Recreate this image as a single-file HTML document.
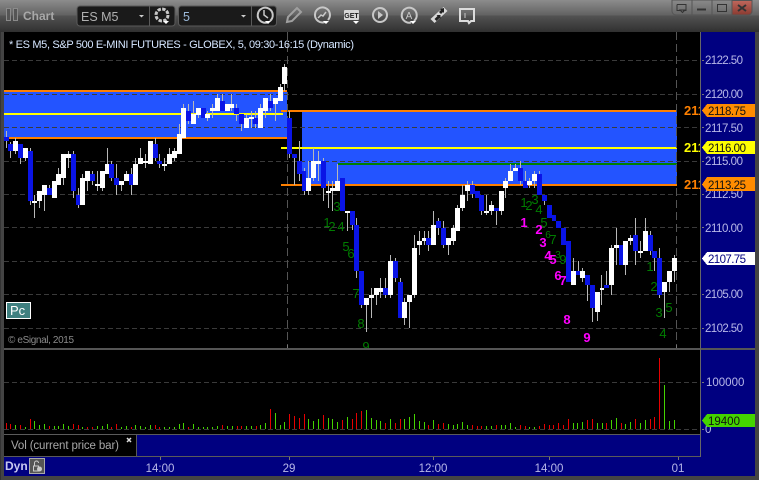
<!DOCTYPE html>
<html><head><meta charset="utf-8"><style>
html,body{margin:0;padding:0;background:#000;width:759px;height:480px;overflow:hidden}
svg{display:block}
text{font-family:"Liberation Sans",sans-serif}
</style></head><body>
<svg width="759" height="480" viewBox="0 0 759 480" xmlns="http://www.w3.org/2000/svg">
<defs>
<linearGradient id="tb" x1="0" y1="0" x2="0" y2="1"><stop offset="0" stop-color="#8c8c8c"/><stop offset=".47" stop-color="#626262"/><stop offset=".5" stop-color="#525252"/><stop offset="1" stop-color="#303030"/></linearGradient>
<linearGradient id="wb" x1="0" y1="0" x2="0" y2="1"><stop offset="0" stop-color="#8a8a8a"/><stop offset="1" stop-color="#666"/></linearGradient>
<linearGradient id="wr" x1="0" y1="0" x2="0" y2="1"><stop offset="0" stop-color="#c0675c"/><stop offset="1" stop-color="#8a3a30"/></linearGradient>
</defs>
<rect width="759" height="480" fill="#444"/>
<rect width="759" height="32" fill="url(#tb)"/>
<rect x="0" y="32" width="1" height="448" fill="#333"/>
<rect x="4" y="32" width="697" height="316" fill="#000"/>

<!-- zones -->
<g shape-rendering="crispEdges">
<rect x="4" y="91" width="283" height="47" fill="#2354ff"/>
<rect x="302" y="111" width="375" height="74" fill="#2354ff"/>
<rect x="4" y="90" width="283" height="2" fill="#ff8000"/>
<rect x="4" y="137" width="283" height="2" fill="#ff8000"/>
<rect x="4" y="113" width="279" height="2" fill="#ffff00"/>
<rect x="281" y="110" width="396" height="2" fill="#ff8000"/>
<rect x="281" y="147" width="396" height="2" fill="#ffff00"/>
<rect x="338" y="163" width="339" height="2" fill="#008000"/>
<rect x="281" y="184" width="396" height="2" fill="#ff8000"/>
</g>
<!-- grid -->
<g stroke="#3a3a3a" stroke-dasharray="5 3" shape-rendering="crispEdges" fill="none">
<path d="M4 60.500H700M4 94.500H700M4 127.500H700M4 161.500H700M4 194.500H700M4 227.500H700M4 261.500H700M4 294.500H700M4 328.500H700"/>
</g>
<path d="M287.500 32V348M676.500 32V348" stroke="#555" stroke-dasharray="8 4" shape-rendering="crispEdges" fill="none"/>

<!-- wicks -->
<path shape-rendering="crispEdges" fill="none" stroke="#b8b8b8" d="M6.500 131V148M10.500 142V158M15.500 138V154M20.500 144V164M25.500 148V161M30.500 148V205M34.500 195V218M39.500 191V208M44.500 185V211M49.500 185V195M54.500 181V198M58.500 168V185M63.500 154V185M68.500 151V168M73.500 151V198M78.500 188V208M82.500 174V205M87.500 171V191M92.500 171V185M97.500 171V191M102.500 171V191M107.500 148V174M111.500 161V181M116.500 164V195M121.500 181V191M126.500 171V181M131.500 168V195M135.500 158V185M140.500 148V164M145.500 154V168M150.500 141V164M155.500 138V161M159.500 154V168M164.500 158V171M169.500 148V164M174.500 148V161M179.500 124V154M183.500 104V138M188.500 104V124M193.500 101V115M198.500 108V118M203.500 108V118M207.500 111V121M212.500 104V118M217.500 94V111M222.500 94V111M227.500 104V111M231.500 94V111M236.500 104V121M241.500 114V131M246.500 114V128M251.500 111V128M255.500 111V128M260.500 104V128M265.500 98V118M270.500 94V111M275.500 98V121M280.500 84V101M284.500 64V91M289.500 111V158M294.500 154V185M299.500 141V181M304.500 168V195M308.500 161V195M313.500 148V181M318.500 151V181M323.500 158V201M328.500 181V208M332.500 181V211M337.500 164V191M347.500 211V231M352.500 211V230M356.500 218V278M361.500 271V308M366.500 298V332M371.500 288V318M376.500 288V305M380.500 278V298M385.500 278V298M390.500 255V298M395.500 258V282M400.500 278V318M404.500 298V325M409.500 295V328M414.500 235V298M419.500 231V255M424.500 231V245M428.500 231V251M433.500 211V245M438.500 218V235M443.500 221V248M448.500 238V255M453.500 225V245M457.500 205V231M462.500 185V211M467.500 181V201M472.500 181V198M481.500 195V215M486.500 195V215M491.500 201V215M496.500 208V225M501.500 191V215M505.500 178V198M510.500 164V181M515.500 164V171M520.500 161V185M525.500 171V188M529.500 178V188M534.500 171V188M539.500 171V195M544.500 195V205M573.500 258V285M578.500 261V275M582.500 268V282M587.500 275V301M592.500 285V322M597.500 292V321M601.500 275V305M606.500 271V288M611.500 245V295M616.500 228V265M621.500 245V265M625.500 241V275M630.500 235V245M635.500 218V265M640.500 241V258M645.500 218V251M650.500 231V255M654.500 251V271M659.500 248V298M664.500 282V318M669.500 271V292M674.500 255V282"/>
<!-- blue bodies -->
<path shape-rendering="crispEdges" fill="#0a14e6" d="M4 137h5v4h-5zM8 144h5v7h-5zM18 144h5v14h-5zM28 151h5v50h-5zM47 188h5v7h-5zM71 154h5v37h-5zM76 195h4v10h-4zM90 174h5v7h-5zM109 164h5v14h-5zM114 178h5v7h-5zM129 174h4v11h-4zM153 144h5v14h-5zM157 161h5v3h-5zM186 111h5v10h-5zM201 108h5v10h-5zM220 101h5v10h-5zM234 108h5v6h-5zM239 114h5v10h-5zM253 118h5v6h-5zM268 101h5v7h-5zM287 118h5v36h-5zM292 154h5v4h-5zM297 161h5v13h-5zM302 171h4v20h-4zM321 161h5v27h-5zM340 178h5v33h-5zM350 211h5v14h-5zM354 225h5v46h-5zM359 271h5v34h-5zM383 288h5v7h-5zM393 261h5v17h-5zM398 282h5v36h-5zM426 238h5v7h-5zM436 221h5v7h-5zM441 228h5v17h-5zM470 185h5v9h-5zM475 191h5v7h-5zM479 195h5v16h-5zM494 208h5v3h-5zM518 168h5v13h-5zM523 181h5v7h-5zM537 174h5v21h-5zM542 195h5v6h-5zM547 205h5v13h-5zM552 215h4v6h-4zM556 221h5v7h-5zM561 228h5v17h-5zM566 241h5v41h-5zM576 271h4v4h-4zM585 275h5v10h-5zM590 285h5v23h-5zM604 285h5v3h-5zM619 245h5v20h-5zM633 235h5v16h-5zM648 235h5v16h-5zM652 251h5v7h-5zM657 258h5v37h-5z"/>
<!-- white bodies -->
<path shape-rendering="crispEdges" fill="#fff" d="M13 141h5v10h-5zM23 148h5v10h-5zM32 201h5v2h-5zM37 191h5v10h-5zM42 185h5v10h-5zM52 181h5v17h-5zM56 174h5v11h-5zM61 154h5v24h-5zM66 154h5v4h-5zM80 178h5v27h-5zM85 171h5v10h-5zM95 184h5v2h-5zM100 171h5v17h-5zM105 164h4v10h-4zM119 181h5v4h-5zM124 174h5v7h-5zM133 164h5v21h-5zM138 158h5v6h-5zM143 161h5v2h-5zM148 141h5v23h-5zM162 164h5v2h-5zM167 154h5v10h-5zM172 151h5v7h-5zM177 134h5v20h-5zM181 108h5v30h-5zM191 114h5v10h-5zM196 108h5v7h-5zM205 114h5v4h-5zM210 108h5v3h-5zM215 98h5v13h-5zM225 104h5v7h-5zM229 104h5v4h-5zM244 118h5v10h-5zM249 117h5v2h-5zM258 108h5v20h-5zM263 98h5v13h-5zM273 98h5v6h-5zM278 87h5v14h-5zM282 67h5v17h-5zM306 178h5v13h-5zM311 161h5v17h-5zM316 161h5v3h-5zM326 191h5v2h-5zM330 188h5v3h-5zM335 181h5v10h-5zM345 211h5v2h-5zM364 298h5v7h-5zM369 295h5v3h-5zM374 288h5v7h-5zM379 288h4v4h-4zM388 261h5v34h-5zM402 302h5v16h-5zM407 295h5v7h-5zM412 248h5v47h-5zM417 241h5v4h-5zM422 238h4v3h-4zM431 225h5v20h-5zM446 238h5v7h-5zM451 228h5v13h-5zM455 208h5v23h-5zM460 195h5v13h-5zM465 185h5v6h-5zM484 211h5v2h-5zM489 205h5v6h-5zM499 191h5v20h-5zM503 181h5v7h-5zM508 171h5v10h-5zM513 168h5v3h-5zM527 181h5v4h-5zM532 174h5v7h-5zM571 271h5v14h-5zM580 271h5v7h-5zM595 292h5v20h-5zM600 288h4v2h-4zM609 248h5v37h-5zM614 245h5v3h-5zM623 241h5v24h-5zM628 238h5v3h-5zM638 251h5v2h-5zM643 231h5v20h-5zM662 282h5v10h-5zM667 271h5v11h-5zM672 258h5v13h-5z"/>

<!-- green sequence -->
<g font-size="13" fill="#007c00" text-anchor="middle">
<text x="327" y="227">1</text><text x="332" y="231">2</text><text x="337" y="211">3</text><text x="341" y="231">4</text><text x="346" y="251">5</text><text x="351" y="258">6</text><text x="356" y="298">7</text><text x="361" y="328">8</text><text x="366" y="351">9</text>
<text x="524" y="207">1</text><text x="529" y="210">2</text><text x="535" y="204">3</text><text x="539" y="214">4</text><text x="544" y="227">5</text><text x="548" y="238" font-size="10">6</text><text x="553" y="244">7</text><text x="558" y="258" font-size="10">3</text><text x="563" y="264">9</text>
<text x="650" y="271">1</text><text x="654" y="291">2</text><text x="659" y="317">3</text><text x="669" y="312">5</text><text x="663" y="338">4</text>
</g>
<!-- magenta sequence -->
<g font-size="13" font-weight="bold" fill="#ff00ff" text-anchor="middle">
<text x="524" y="227">1</text><text x="539" y="234">2</text><text x="543" y="247">3</text><text x="548" y="260">4</text><text x="553" y="264">5</text><text x="558" y="280">6</text><text x="563" y="285">7</text><text x="567" y="324">8</text><text x="587" y="342">9</text>
</g>

<!-- orange/yellow labels clipped by axis -->
<g font-size="13" font-weight="bold">
<text x="684" y="115" fill="#ff8000">2118.75</text>
<text x="684" y="152" fill="#ffff00">2116.00</text>
<text x="684" y="189" fill="#ff8000">2113.25</text>
</g>

<!-- title -->
<text x="9" y="48" font-size="11" fill="#d5e6ff" textLength="345">* ES M5, S&amp;P 500 E-MINI FUTURES - GLOBEX, 5, 09:30-16:15 (Dynamic)</text>

<!-- Pc -->
<rect x="6.500" y="302.500" width="24" height="16" fill="#3f8080" stroke="#fff" shape-rendering="crispEdges"/>
<text x="10" y="315" font-size="13" fill="#fff">Pc</text>
<text x="8" y="343" font-size="10" fill="#8a8a8a" textLength="66">© eSignal, 2015</text>

<!-- lower panels -->
<g shape-rendering="crispEdges">
<rect x="701" y="32" width="54" height="444" fill="#000080"/>
<rect x="4" y="457" width="751" height="19" fill="#000080"/>
<rect x="137" y="435" width="564" height="22" fill="#000080"/>
<rect x="4" y="350" width="697" height="84" fill="#000"/>
<rect x="4" y="435" width="132" height="21" fill="#000"/>
<rect x="4" y="348" width="751" height="2" fill="#555"/>
<rect x="4" y="434" width="697" height="1" fill="#5a5a5a"/>
<rect x="136" y="435" width="1" height="22" fill="#5a5a5a"/>
<rect x="4" y="456" width="697" height="1" fill="#5a5a5a"/>
<rect x="700" y="32" width="1" height="425" fill="#666"/>
</g>
<path d="M4 382.500H700M4 429.500H700" stroke="#3a3a3a" stroke-dasharray="5 3" shape-rendering="crispEdges"/>
<path d="M287.500 345V348M676.500 345V348M160.500 457V460M289.500 457V460M433.500 457V460M549.500 457V460M678.500 457V460M702 60.500h2M702 94.500h2M702 127.500h2M702 161.500h2M702 194.500h2M702 227.500h2M702 294.500h2M702 328.500h2M702 382.500h2M702 429.500h2" stroke="#777" shape-rendering="crispEdges"/>

<!-- volume red -->
<path shape-rendering="crispEdges" fill="none" stroke="#e60000" d="M6.500 423V429M10.500 424V429M20.500 425V429M30.500 419V429M49.500 426V429M73.500 424V429M78.500 425V429M87.500 427V429M92.500 427V429M111.500 427V429M116.500 424V429M131.500 427V429M155.500 425V429M159.500 427V429M188.500 427V429M222.500 425V429M237.500 426V429M241.500 426V429M256.500 426V429M270.500 409V429M289.500 414V429M294.500 416V429M299.500 418V429M304.500 414V429M323.500 415V429M342.500 420V429M352.500 419V429M356.500 413V429M361.500 411V429M385.500 423V429M395.500 423V429M400.500 419V429M428.500 425V429M438.500 424V429M443.500 423V429M472.500 425V429M477.500 426V429M481.500 426V429M496.500 425V429M520.500 425V429M525.500 426V429M539.500 426V429M544.500 424V429M549.500 425V429M553.500 425V429M558.500 423V429M563.500 425V429M568.500 419V429M587.500 420V429M592.500 419V429M606.500 423V429M621.500 423V429M635.500 419V429M650.500 419V429M654.500 417V429M659.500 358V429"/>
<!-- volume green -->
<path shape-rendering="crispEdges" fill="none" stroke="#44d400" d="M15.500 425V429M25.500 427V429M34.500 421V429M39.500 425V429M44.500 424V429M54.500 426V429M58.500 426V429M63.500 424V429M68.500 426V429M82.500 427V429M97.500 426V429M102.500 426V429M107.500 424V429M121.500 427V429M126.500 426V429M135.500 425V429M140.500 426V429M145.500 427V429M150.500 425V429M164.500 427V429M169.500 427V429M174.500 427V429M179.500 424V429M183.500 423V429M193.500 424V429M198.500 427V429M203.500 427V429M207.500 427V429M212.500 427V429M217.500 426V429M227.500 426V429M232.500 426V429M246.500 426V429M251.500 426V429M260.500 425V429M265.500 423V429M275.500 413V429M280.500 425V429M284.500 422V429M308.500 419V429M313.500 421V429M318.500 419V429M328.500 418V429M332.500 419V429M337.500 422V429M347.500 417V429M366.500 410V429M371.500 418V429M376.500 420V429M380.500 421V429M390.500 419V429M404.500 419V429M409.500 417V429M414.500 414V429M419.500 421V429M424.500 422V429M433.500 420V429M448.500 424V429M453.500 425V429M457.500 424V429M462.500 422V429M467.500 425V429M486.500 426V429M491.500 426V429M501.500 425V429M505.500 425V429M510.500 423V429M515.500 427V429M529.500 427V429M534.500 427V429M573.500 423V429M577.500 423V429M582.500 422V429M597.500 423V429M602.500 423V429M611.500 420V429M616.500 418V429M625.500 424V429M630.500 422V429M640.500 423V429M645.500 420V429M664.500 385V429M669.500 421V429M674.500 420V429"/>

<!-- axis labels -->
<g font-size="11.500" fill="#b8b8e8">
<text x="705" y="64" textLength="38">2122.50</text><text x="705" y="98" textLength="38">2120.00</text><text x="705" y="132" textLength="38">2117.50</text><text x="705" y="165" textLength="38">2115.00</text><text x="705" y="198" textLength="38">2112.50</text><text x="705" y="232" textLength="38">2110.00</text><text x="705" y="298" textLength="38">2105.00</text><text x="705" y="332" textLength="38">2102.50</text>
<text x="706" y="386">100000</text><text x="705" y="433">0</text>
<g text-anchor="middle"><text x="160" y="472">14:00</text><text x="289" y="472">29</text><text x="433" y="472">12:00</text><text x="549" y="472">14:00</text><text x="678" y="472">01</text></g>
</g>

<!-- tags -->
<g shape-rendering="crispEdges">
<polygon points="702,110.500 707,104 755,104 755,117 707,117" fill="#ff8c00"/>
<polygon points="702,147.500 707,141 755,141 755,154 707,154" fill="#ffff00"/>
<polygon points="702,184.500 707,177 755,177 755,191 707,191" fill="#ff8c00"/>
<polygon points="702,258.500 707,252 755,252 755,265 707,265" fill="#fff"/>
<polygon points="702,420.500 707,414 755,414 755,427 707,427" fill="#44d400"/>
</g>
<g font-size="11.500" fill="#111">
<text x="708" y="115" textLength="38">2118.75</text><text x="708" y="152" textLength="38">2116.00</text><text x="708" y="189" textLength="38">2113.25</text>
<text x="708" y="263" fill="#000080" textLength="38">2107.75</text><text x="708" y="425">19400</text>
</g>

<!-- Vol label -->
<text x="11" y="449" font-size="11.500" fill="#a8a8a8" textLength="108">Vol (current price bar)</text>
<path d="M127 438l4 4m0-4l-4 4" stroke="#ddd" stroke-width="1.500" fill="none"/>
<text x="5" y="470" font-size="12" font-weight="bold" fill="#c8c8f0">Dyn</text>
<rect x="29.500" y="458.500" width="15" height="15" fill="#555" stroke="#aaa" shape-rendering="crispEdges"/>
<path d="M33.500 471v-5h5v5zM34.500 466v-3a2 2 0 0 1 4 0" fill="none" stroke="#ccc"/>
<circle cx="39.500" cy="469" r="2.500" fill="#ccc"/>

<!-- toolbar -->
<g fill="#555" stroke="#8a8a8a" shape-rendering="crispEdges"><rect x="6.500" y="8.500" width="4" height="12"/><rect x="13.500" y="8.500" width="4" height="12"/></g>
<text x="23" y="20" font-size="12" font-weight="bold" fill="#a8a8a8">Chart</text>
<rect x="77" y="6" width="98" height="20" rx="3" fill="#1a1a1a" stroke="#5a5a5a"/>
<rect x="149" y="6" width="1" height="20" fill="#5a5a5a"/>
<text x="81" y="21" font-size="12.500" fill="#b0b0b0">ES M5</text>
<path d="M139 15h5l-2.500 2.500z" fill="#ccc"/>
<rect x="178.500" y="6" width="98" height="20" rx="3" fill="#1a1a1a" stroke="#5a5a5a"/>
<rect x="251" y="6" width="1" height="20" fill="#5a5a5a"/>
<text x="183" y="21" font-size="12.500" fill="#9ab8d8">5</text>
<path d="M241 15h5l-2.500 2.500z" fill="#ccc"/>

<g fill="none" stroke="#c8c8c8" stroke-width="2">
<!-- gear -->
<circle cx="162" cy="15" r="6" stroke-width="3" stroke-dasharray="3.400 1.310"/>
<!-- clock -->
<path d="M270 21a7.500 7.500 0 1 0-3 1.500"/>
<path d="M264 10v5l4 3" stroke-width="1.500"/>
<!-- pencil -->
<path d="M287 22l1-5 9-9 4 4-9 9z" stroke="#a0a0a0"/>
<!-- chart circle -->
<path d="M328 20a7.500 7.500 0 1 0-3 2"/>
<path d="M318 18l3-3 2 1 3-4" stroke-width="1.500"/>
<!-- play circle -->
<circle cx="380" cy="15" r="7"/>
<path d="M378 11l5 4-5 4z" fill="#c8c8c8" stroke="none"/>
<!-- A circle -->
<path d="M414 21a7.500 7.500 0 1 0-3 1.500"/>
<!-- speech -->
<path d="M460 9h14v12h-3l-2 2-1-2h-8z" stroke="#dcdcdc"/>
<path d="M465 13v5" stroke-width="1"/>
</g>
<!-- diamonds -->
<path d="M434.500 23l-4-4 13-12 4 4z" fill="#d8d8d8"/>
<path d="M434.500 19l3-3-1-1h4v4l-1-1-3 3zM444 8l-4 1 1 1-2 2 2 2 2-2 1 1z" fill="#222"/>
<text x="409" y="19" font-size="10" fill="#c8c8c8" text-anchor="middle">A</text>
<rect x="344" y="10" width="15" height="10" rx="1" fill="#d8d8d8"/>
<text x="351.500" y="18" font-size="7" font-weight="bold" fill="#222" text-anchor="middle">GET</text>
<g fill="#fff"><path d="M163 21h6l-3 3zM265 21h6l-3 3zM323 21h6l-3 3zM353 21h6l-3 3zM410 21h6l-3 3z"/></g>

<!-- window buttons -->
<path d="M672 0h80v11a4 4 0 0 1-4 4h-72a4 4 0 0 1-4-4z" fill="url(#wb)" stroke="#555"/>
<path d="M732 .500h20v10.500a4 4 0 0 1-4 4h-16z" fill="url(#wr)" stroke="#555"/>
<path d="M692 0v15M712 0v15" stroke="#555"/>
<path d="M677 4.500h9v6h-3M677 4.500v6h3M680 10h5l-2.500 2.500z" fill="none" stroke="#333"/>
<path d="M697 9.500h9" stroke="#333" stroke-width="2"/>
<rect x="717.500" y="4.500" width="9" height="7" fill="none" stroke="#333"/>
<path d="M738 5l8 6m0-6l-8 6" stroke="#333" stroke-width="2" fill="none"/>
</svg>
</body></html>
